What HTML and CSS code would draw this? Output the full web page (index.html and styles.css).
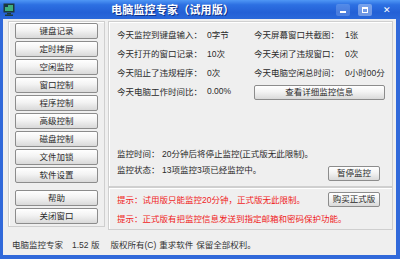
FILE: index.html
```html
<!DOCTYPE html>
<html lang="zh-CN">
<head>
    <meta charset="UTF-8">
    <title>电脑监控专家（试用版）</title>
    <link rel="stylesheet" href="styles.css">
</head>
<body>
    <div class="window">
        <header class="titlebar">
            <svg class="app-icon" width="12" height="13" viewBox="0 0 12 13">
                <rect x="0.5" y="0.5" width="11" height="9" fill="#1d3a3a" />
                <rect x="2" y="2" width="8" height="6" fill="#3fae7c" />
                <rect x="2" y="2" width="3" height="2" fill="#17324a" />
                <rect x="4" y="10" width="4" height="1.5" fill="#1d3a3a" />
                <rect x="2" y="11.5" width="8" height="1.5" fill="#1d3a3a" />
            </svg>
            <h1>电脑监控专家（试用版）</h1>
            <div class="controls">
                <span class="ctl min"></span>
                <span class="ctl max"></span>
                <span class="ctl close">✕</span>
            </div>
        </header>

        <div class="client">
            <div class="main">
                <nav class="group nav">
                    <button>键盘记录</button>
                    <button>定时拷屏</button>
                    <button>空闲监控</button>
                    <button>窗口控制</button>
                    <button>程序控制</button>
                    <button>高级控制</button>
                    <button>磁盘控制</button>
                    <button>文件加锁</button>
                    <button>软件设置</button>
                    <button class="sep">帮助</button>
                    <button>关闭窗口</button>
                </nav>

                <div class="right">
                    <section class="group stats">
                        <div class="stat-grid">
                            <span>今天监控到键盘输入：</span><span>0字节</span>
                            <span>今天屏幕窗口共截图：</span><span>1张</span>
                            <span>今天打开的窗口记录：</span><span>10次</span>
                            <span>今天关闭了违规窗口：</span><span>0次</span>
                            <span>今天阻止了违规程序：</span><span>0次</span>
                            <span>今天电脑空闲总时间：</span><span>0小时00分</span>
                            <span>今天电脑工作时间比：</span><span>0.00%</span>
                            <button class="wide">查看详细监控信息</button>
                        </div>
                        <div class="monitor">
                            <div class="mrow">
                                <span class="mlabel">监控时间：</span>
                                <span>20分钟后将停止监控(正式版无此限制)。</span>
                            </div>
                            <div class="mrow">
                                <span class="mlabel">监控状态：</span>
                                <span>13项监控3项已经监控中。</span>
                                <button class="small">暂停监控</button>
                            </div>
                        </div>
                    </section>

                    <section class="group notice">
                        <div class="nrow">
                            <span>提示：试用版只能监控20分钟，正式版无此限制。</span>
                            <button class="small">购买正式版</button>
                        </div>
                        <div class="nrow second">
                            <span>提示：正式版有把监控信息发送到指定邮箱和密码保护功能。</span>
                        </div>
                    </section>
                </div>
            </div>

            <footer class="statusbar">
                <span class="app">电脑监控专家</span>
                <span class="ver">1.52 版</span>
                <span class="copy">版权所有(C)</span>
                <span>重求软件</span>
                <span>保留全部权利。</span>
            </footer>
        </div>
    </div>
</body>
</html>
```

FILE: styles.css
```css
body {
    margin: 0;
    font-family: "Liberation Sans", "Noto Sans CJK SC", sans-serif;
    font-size: 8.5px;
    color: #2a2a2a;
    background: #fff;
}

.window {
    width: 400px;
    height: 259px;
    display: flex;
    flex-direction: column;
}

.titlebar {
    height: 19px;
    flex: none;
    display: flex;
    align-items: center;
    padding: 0 6px 0 3px;
    background: linear-gradient(#4f97f5 0%, #2d70e2 25%, #2360d6 65%, #2a68da 100%);

    h1 {
        margin: 0 0 0 96px;
        font-family: "Noto Sans CJK SC", sans-serif;
        font-size: 11px;
        font-weight: bold;
        color: #fff;
        text-shadow: 1px 1px 0 #0e2f86;
        line-height: 19px;
        letter-spacing: 0.2px;
    }
}

.app-icon {
    display: block;
}

.controls {
    margin-left: auto;
    display: flex;
    gap: 8px;

    .ctl {
        width: 14px;
        height: 12px;
        border-radius: 2px;
        position: relative;
        background: rgba(255, 255, 255, .18);
        color: #fff;
        font-size: 9px;
        line-height: 12px;
        text-align: center;
    }

    .min::after {
        content: "";
        position: absolute;
        left: 4px;
        right: 4px;
        bottom: 3px;
        height: 2px;
        background: #fff;
    }

    .max {
        background: rgba(255, 255, 255, .35);
    }

    .max::after {
        content: "";
        position: absolute;
        left: 4px;
        top: 3px;
        width: 4px;
        height: 3px;
        border: 1px solid #fff;
        border-top-width: 2px;
    }

    .close {
        background: none;
    }
}

.client {
    flex: 1;
    display: flex;
    flex-direction: column;
    background: #efefef;
    border: solid #3169da;
    border-width: 0 4px 4px 3px;
}

.main {
    display: flex;
    align-items: flex-start;
    gap: 3px;
    padding: 2px 3px 0 5px;
    height: 209px;
}

.group {
    box-sizing: border-box;
    border: 1px solid #cfcfcf;
    box-shadow: inset 1px 1px 0 #fff;
}

button {
    font-family: "Liberation Sans", "Noto Sans CJK SC", sans-serif;
    font-size: 8.5px;
    color: #2a2a2a;
    padding: 0;
    height: 16px;
    border: 1px solid #8c8c8c;
    border-radius: 2px;
    background: linear-gradient(#ffffff, #f3f3f3 45%, #d9d9d9);
    line-height: 14px;
}

.nav {
    width: 97px;
    height: 206px;
    padding: 1px 6px;
    display: flex;
    flex-direction: column;
    gap: 2px;

    button {
        width: 100%;
        flex: none;
    }

    .sep {
        margin-top: 5px;
    }
}

.right {
    width: 285px;
    display: flex;
    flex-direction: column;
}

.stats {
    height: 166px;
    padding: 2px 12px 0 8px;
    display: flex;
    flex-direction: column;
}

.stat-grid {
    display: grid;
    grid-template-columns: 90px 47px 91px 1fr;
    grid-auto-rows: 19px;
    align-items: center;
    white-space: nowrap;

    .wide {
        grid-column: 3 / 5;
        align-self: end;
        height: 15px;
        line-height: 13px;
    }
}

.monitor {
    margin-top: auto;
    padding-bottom: 6px;
    display: flex;
    flex-direction: column;
    gap: 4px;
}

.mrow {
    display: flex;
    align-items: flex-start;
    line-height: 12px;
    white-space: nowrap;

    .mlabel {
        width: 45px;
        flex: none;
    }
}

.mrow:last-child {
    height: 16px;
}

button.small {
    margin-left: auto;
    width: 52px;
    height: 15px;
    line-height: 13px;
    flex: none;
}

.mrow .small {
    margin-top: 2px;
}

.notice {
    height: 43px;
    padding: 4px 12px 0 8px;
    color: #f01c1c;
}

.nrow {
    display: flex;
    align-items: center;
    white-space: nowrap;
    line-height: 12px;

    &.second {
        margin-top: 6px;
    }
}

.statusbar {
    flex: 1;
    display: flex;
    align-items: center;
    gap: 3px;
    padding: 2px 0 0 9px;
    white-space: nowrap;
    color: #333;

    .app {
        margin-right: 6px;
    }

    .ver {
        margin-right: 8px;
    }
}
```
